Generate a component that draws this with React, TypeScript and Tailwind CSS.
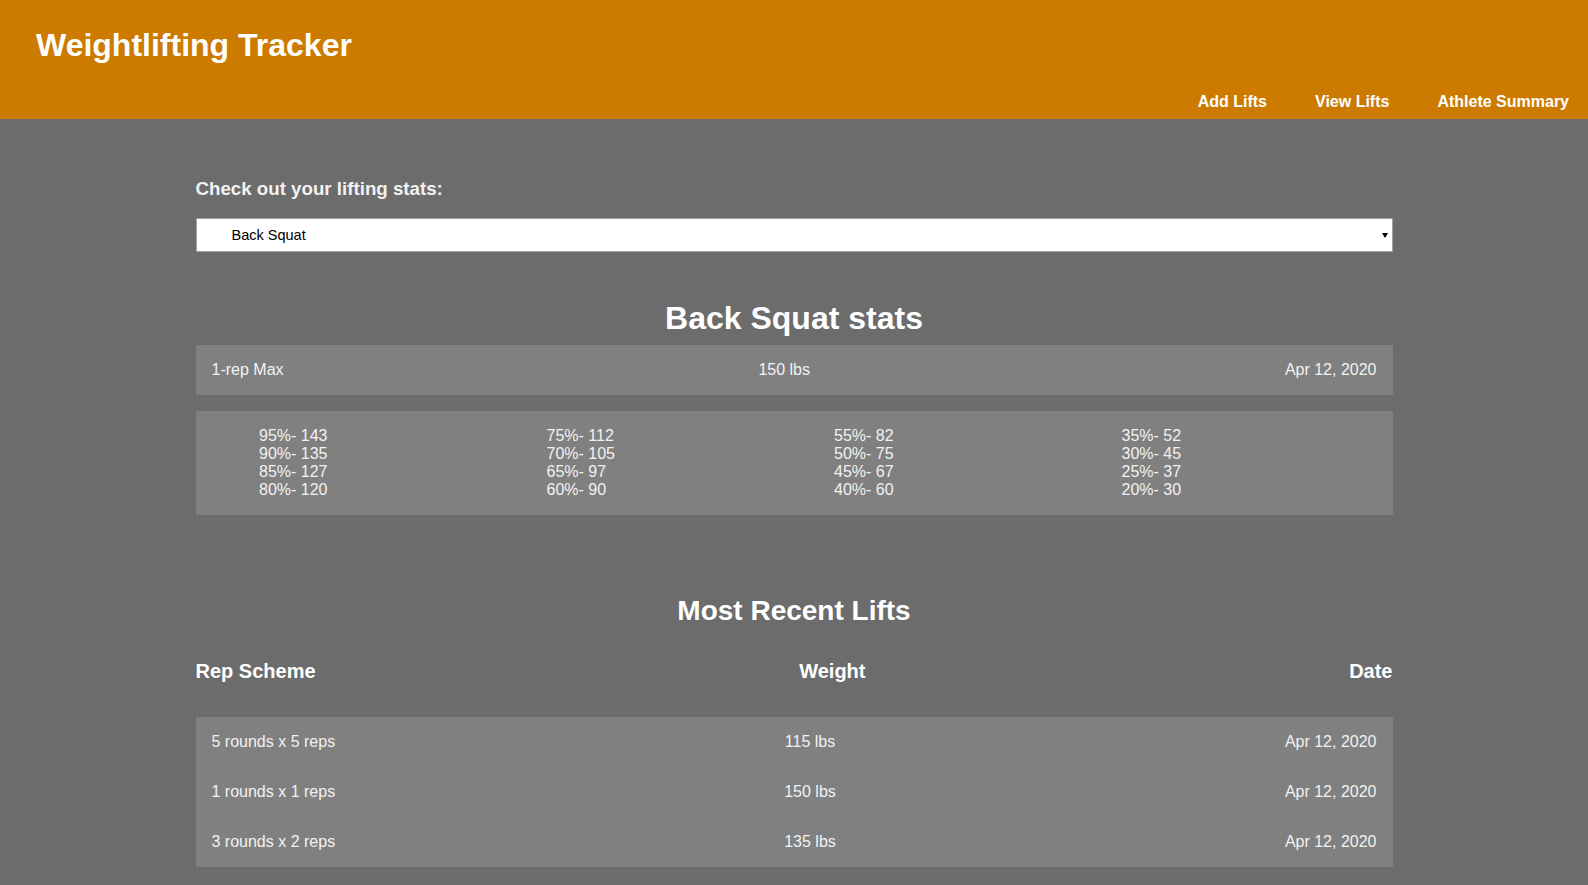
import React from 'react'

const percents = [
  ['95%- 143', '90%- 135', '85%- 127', '80%- 120'],
  ['75%- 112', '70%- 105', '65%- 97', '60%- 90'],
  ['55%- 82', '50%- 75', '45%- 67', '40%- 60'],
  ['35%- 52', '30%- 45', '25%- 37', '20%- 30'],
]

const lifts = [
  { scheme: '5 rounds x 5 reps', weight: '115 lbs', date: 'Apr 12, 2020' },
  { scheme: '1 rounds x 1 reps', weight: '150 lbs', date: 'Apr 12, 2020' },
  { scheme: '3 rounds x 2 reps', weight: '135 lbs', date: 'Apr 12, 2020' },
]

function Header() {
  return (
    <header className="flex h-[119px] flex-col bg-[#cc7a00] text-white">
      <h1 className="pt-[27px] pl-[36px] text-[32px] leading-[37px] font-bold">
        Weightlifting Tracker
      </h1>
      <nav className="mt-auto flex justify-end gap-[48px] pr-[19px] pb-2 text-base leading-[18px] font-bold">
        <a href="#">Add Lifts</a>
        <a href="#">View Lifts</a>
        <a href="#">Athlete Summary</a>
      </nav>
    </header>
  )
}

function LiftSelect() {
  return (
    <div className="mt-[18px] flex h-[34px] items-center justify-between border border-[#a0a0a0] bg-white pr-[4px] pl-[35px] text-[14.5px] leading-[17px] text-black">
      <span>Back Squat</span>
      <svg width="6" height="5" viewBox="0 0 6 5">
        <polygon points="0,0 6,0 3,5" fill="#000" />
      </svg>
    </div>
  )
}

export default function App() {
  return (
    <div
      className="min-h-screen bg-[#6c6c6c] pb-10"
      style={{ fontFamily: '"Liberation Sans", Arial, sans-serif' }}
    >
      <Header />

      <main className="mx-auto w-[1197px] text-[#f2f2f2]">
        <h3 className="mt-[59px] text-[18.72px] leading-[22px] font-bold">
          Check out your lifting stats:
        </h3>
        <LiftSelect />

        <h2 className="mt-[48px] text-center text-[32px] leading-[37px] font-bold text-white">
          Back Squat stats
        </h2>
        <div className="mt-[8px] flex h-[50px] items-center justify-between bg-[#808080] px-4 text-base leading-[18px]">
          <span>1-rep Max</span>
          <span>150 lbs</span>
          <span>Apr 12, 2020</span>
        </div>

        <div className="mt-4 grid grid-cols-[repeat(4,287.5px)] bg-[#808080] py-4 pl-[63.5px] text-base leading-[18px]">
          {percents.map((col, i) => (
            <div key={i} className="flex flex-col">
              {col.map((p) => (
                <span key={p}>{p}</span>
              ))}
            </div>
          ))}
        </div>

        <h2 className="mt-[80px] text-center text-[28px] leading-[32px] font-bold text-white">
          Most Recent Lifts
        </h2>
        <div className="mt-[33px] flex justify-between text-[20px] leading-[23px] font-bold text-white">
          <span>Rep Scheme</span>
          <span>Weight</span>
          <span>Date</span>
        </div>

        <div className="mt-[34px] bg-[#808080]">
          {lifts.map((l, i) => (
            <div key={i} className="flex h-[50px] items-center justify-between px-4 text-base leading-[18px]">
              <span>{l.scheme}</span>
              <span>{l.weight}</span>
              <span>{l.date}</span>
            </div>
          ))}
        </div>
      </main>
    </div>
  )
}
